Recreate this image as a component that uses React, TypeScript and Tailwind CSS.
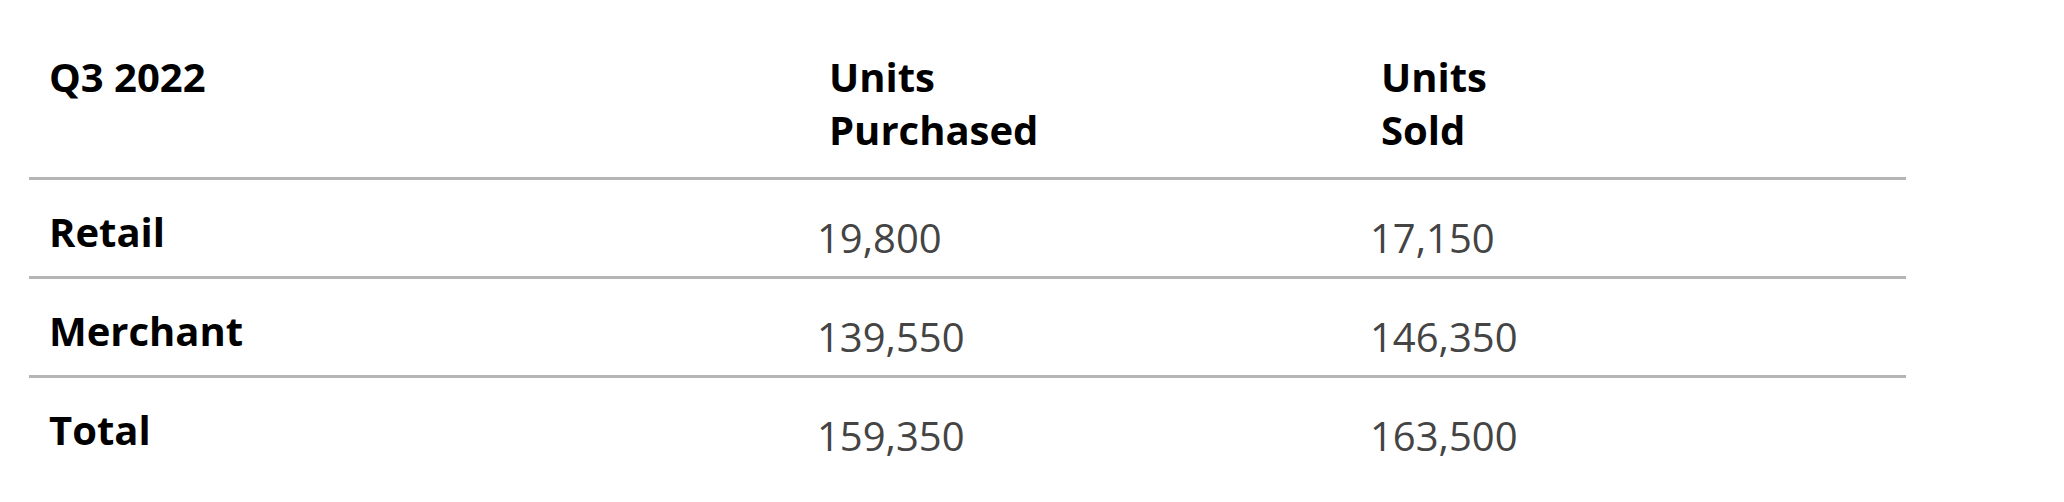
const rows = [
    { label: "Retail", purchased: "19,800", sold: "17,150" },
    { label: "Merchant", purchased: "139,550", sold: "146,350" },
    { label: "Total", purchased: "159,350", sold: "163,500" },
];

export default function App() {
    return <div className="min-h-[502px] bg-white pl-[29px] font-['Open_Sans',sans-serif] text-[40px] leading-[53px]">
        <div className="w-[1877px]">
            <div className="grid grid-cols-[768px_553px_556px] border-b-[3px] border-[#b5b5b5] pt-[50px] pb-[21px] font-bold text-black">
                <div className="pl-5">Q3 2022</div>
                <div className="pl-[32px]">Units<br />Purchased</div>
                <div className="pl-[31px]">Units<br />Sold</div>
            </div>
            {rows.map((row, i) => (
                <div
                    key={row.label}
                    className={i < rows.length - 1
                        ? "grid grid-cols-[768px_553px_556px] h-[99px] border-b-[3px] border-[#b5b5b5]"
                        : "grid grid-cols-[768px_553px_556px] h-[99px]"}
                >
                    <div className="pl-5 pt-[25px] font-bold text-black">{row.label}</div>
                    <div className="pl-5 pt-[31px] text-[#444444]">{row.purchased}</div>
                    <div className="pl-5 pt-[31px] text-[#444444]">{row.sold}</div>
                </div>
            ))}
        </div>
    </div>
}
